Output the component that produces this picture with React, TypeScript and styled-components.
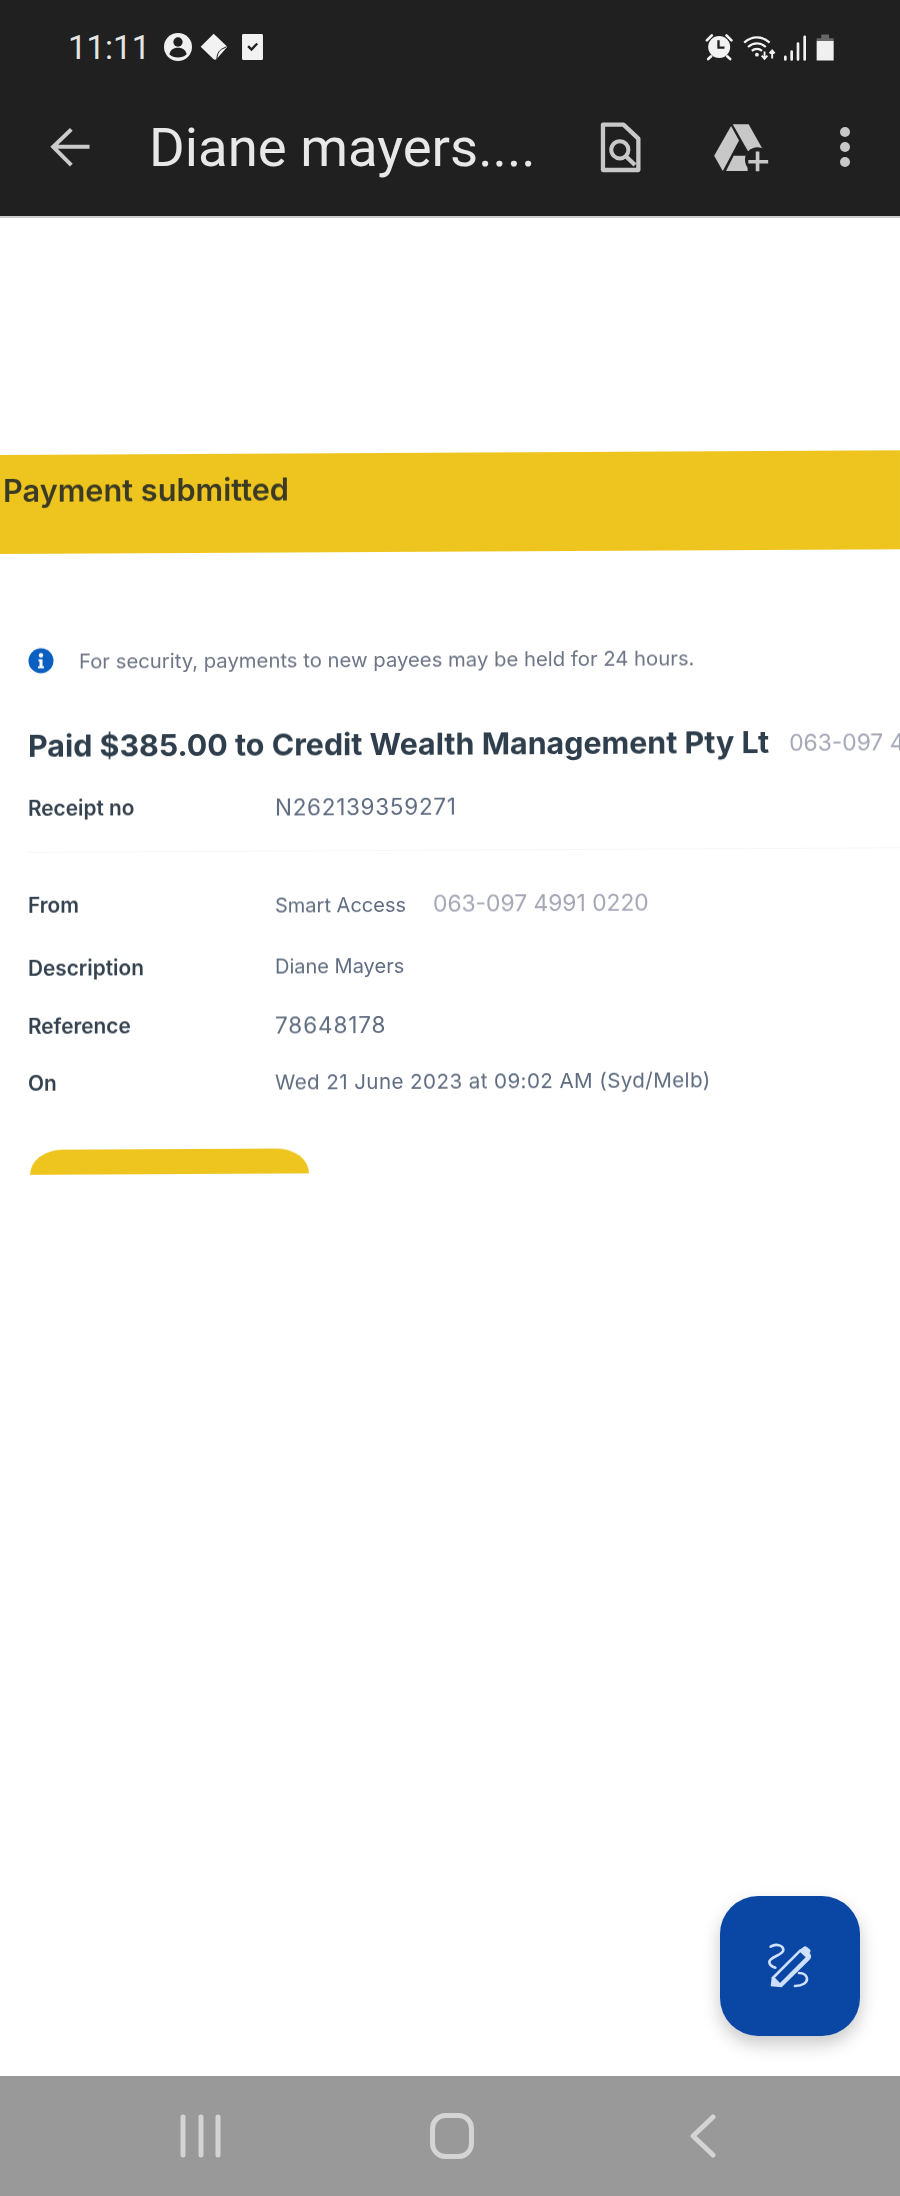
import React from "react";
import styled, { createGlobalStyle } from "styled-components";

const Global = createGlobalStyle`
    html, body {
        margin: 0;
        padding: 0;
        background: #fff;
    }
`

const Screen = styled.div`
    width: 900px;
    height: 2196px;
    display: flex;
    flex-direction: column;
    overflow: hidden;
    font-family: Inter, "Liberation Sans", sans-serif;
`

const Header = styled.header`
    flex: none;
    height: 216px;
    background: #202020;
    border-bottom: 2px solid #cfcfcf;
`

const StatusBar = styled.div`
    height: 94px;
    padding: 0 66px 0 68px;
    display: flex;
    align-items: center;
`

const Time = styled.span`
    font-family: Roboto, sans-serif;
    font-size: 33px;
    font-weight: 400;
    color: #e4e4e4;
    margin-right: 14px;
`

const StatusGroup = styled.div<{ $gap: number }>`
    display: flex;
    align-items: center;
    gap: ${p => p.$gap}px;
`

const StatusIcon = styled.svg<{ $left?: number, $right?: number }>`
    margin-left: ${p => p.$left ?? 0}px;
    margin-right: ${p => p.$right ?? 0}px;
`

const Spacer = styled.div`
    flex: 1;
`

const Toolbar = styled.div`
    height: 106px;
    padding: 0 49px 0 48px;
    display: flex;
    align-items: center;
`

const Title = styled.h1`
    flex: 1;
    margin: 0 0 0 56px;
    font-family: Roboto, sans-serif;
    font-size: 54.5px;
    font-weight: 400;
    color: #e8e8e8;
    white-space: nowrap;
`

const Actions = styled.div`
    display: flex;
    align-items: center;
    gap: 68.5px;
`

const Viewer = styled.main`
    flex: 1;
    position: relative;
    overflow: hidden;
    background: #fff;
`

const Sheet = styled.div`
    width: 900px;
    padding-top: 237px;
    transform: skewY(-0.3deg);
    transform-origin: 0 0;
    filter: blur(0.45px);
`

const Banner = styled.div`
    height: 99px;
    padding: 20px 0 0 3px;
    box-sizing: border-box;
    background: #eec51e;
    font-size: 30.7px;
    line-height: 32px;
    font-weight: 600;
    color: #3b3a25;
`

const Notice = styled.div`
    margin: 93px 0 0 28px;
    height: 28px;
    display: flex;
    align-items: center;
    gap: 25px;
    font-size: 20.3px;
    color: #6d7585;
    white-space: nowrap;
`

const Heading = styled.div`
    margin: 51px 0 0 28px;
    height: 40px;
    display: flex;
    align-items: center;
    white-space: nowrap;
`

const HeadingText = styled.h2`
    margin: 0;
    font-size: 30.4px;
    font-weight: 700;
    color: #2f3e4c;
`

const Account = styled.span<{ $gap: number }>`
    margin-left: ${p => p.$gap}px;
    font-size: 22.8px;
    color: #a4a7b6;
`

const Row = styled.div<{ $top: number }>`
    margin: ${p => p.$top}px 0 0 28px;
    height: 40px;
    display: grid;
    grid-template-columns: 247px 1fr;
    align-items: center;
    font-size: 20px;
    white-space: nowrap;
`

const Label = styled.span`
    font-weight: 600;
    font-size: 20.8px;
    color: #34424f;
`

const Value = styled.span<{ $size?: number, $tracking?: number }>`
    font-size: ${p => p.$size ?? 20}px;
    letter-spacing: ${p => p.$tracking ?? 0}px;
    color: #5f6c80;
`

const Divider = styled.div`
    margin: 24px 0 0 28px;
    height: 1px;
    background: #f6f6f6;
`

const YellowButton = styled.div`
    margin: 47px 0 0 30px;
    width: 279px;
    height: 25px;
    background: #eec51e;
    border-radius: 32px 32px 0 0 / 25px 25px 0 0;
`

const Fab = styled.button`
    position: absolute;
    right: 40px;
    bottom: 40px;
    width: 140px;
    height: 140px;
    padding: 0;
    border: 0;
    border-radius: 38px;
    background: #0a47a5;
    box-shadow: 0 8px 18px rgba(0, 0, 0, 0.22);
    display: flex;
    align-items: center;
    justify-content: center;
`

const NavBar = styled.nav`
    flex: none;
    height: 120px;
    background: #999999;
    display: flex;
    align-items: center;
    padding: 0 184px 0 180px;
    justify-content: space-between;
`

const HomeIcon = styled.svg`
    margin-right: 9px;
`

export default function App() {
    return (
        <Screen>
            <Global />
            <Header>
                <StatusBar>
                    <Time>11:11</Time>
                    <StatusGroup $gap={8}>
                        <svg width="28" height="28" viewBox="488 104 78 78">
                            <circle cx="527" cy="143" r="39" fill="#f0f0f0" />
                            <circle cx="527" cy="129" r="13" fill="#202020" />
                            <path d="M503 163c3-14 14-18 24-18s21 4 24 18c-6 6-15 9-24 9s-18-3-24-9z" fill="#202020" />
                        </svg>
                        <svg width="28" height="28" viewBox="600 100 86 86">
                            <path d="M642 102l42 40-33 38c-3 3-7 3-10 0l-39-38z" fill="#f2f2f2" />
                            <path d="M652 180c0-12 4-24 14-30l16-8" fill="none" stroke="#202020" strokeWidth="3" />
                        </svg>
                        <StatusIcon $left={6} width="21" height="26" viewBox="727 104 62 77">
                            <rect x="727" y="104" width="62" height="77" rx="4" fill="#f2f2f2" />
                            <path d="M745 140l10 10 17-18" fill="none" stroke="#202020" strokeWidth="7" />
                        </StatusIcon>
                    </StatusGroup>
                    <Spacer />
                    <StatusGroup $gap={5}>
                        <svg width="32" height="30" viewBox="760 95 95 90">
                            <circle cx="805" cy="140" r="33" fill="#f2f2f2" />
                            <path d="M768 120l15-15M842 120l-15-15M781 168l-9 8M829 168l9 8" stroke="#f2f2f2" strokeWidth="8" strokeLinecap="round" />
                            <path d="M803 120v22h18" fill="none" stroke="#202020" strokeWidth="7" />
                        </svg>
                        <StatusIcon $right={2} width="35" height="27" viewBox="870 95 110 85">
                            <path d="M880 122c24-22 56-22 80 0M892 136c17-15 39-15 56 0M904 148c9-8 23-8 32 0" fill="none" stroke="#f2f2f2" strokeWidth="7" />
                            <circle cx="920" cy="160" r="6" fill="#f2f2f2" />
                            <path d="M944 150v20M935 163l9 10 9-10M968 172v-22M960 156l8-9 8 9" fill="none" stroke="#f2f2f2" strokeWidth="6" />
                        </StatusIcon>
                        <svg width="25" height="27" viewBox="995 100 75 80">
                            <path d="M1002 176v-8M1021 176v-24M1040 176v-48M1060 176v-68" stroke="#f2f2f2" strokeWidth="8" strokeLinecap="round" />
                        </svg>
                        <StatusIcon $left={3.5} width="18" height="27" viewBox="1096 100 55 80">
                            <path d="M1098 112h14v-12h24v12h14v8h-52z" fill="#666666" />
                            <rect x="1098" y="120" width="52" height="60" rx="2" fill="#f0f0f0" />
                        </StatusIcon>
                    </StatusGroup>
                </StatusBar>
                <Toolbar>
                    <svg width="45" height="43" viewBox="145 375 135 130">
                        <path d="M270 438H160M215 385l-55 53 55 55" fill="none" stroke="#cbcbcb" strokeWidth="12" />
                    </svg>
                    <Title>Diane mayers....</Title>
                    <Actions>
                        <svg width="43" height="53" viewBox="445 360 130 160">
                            <path d="M457 371h62l45 42v95H457z" fill="none" stroke="#c8c8c8" strokeWidth="13" strokeLinejoin="round" />
                            <circle cx="508" cy="447" r="26" fill="none" stroke="#c8c8c8" strokeWidth="12" />
                            <path d="M527 467l27 26" stroke="#c8c8c8" strokeWidth="13" />
                        </svg>
                        <svg width="60" height="53" viewBox="780 355 180 160">
                            <path d="M845 365h48l50 88h-48z" fill="#c8c8c8" />
                            <path d="M840 370l24 44-49 92-26-46z" fill="#c8c8c8" />
                            <path d="M848 460h42l0 46h-65z" fill="#c8c8c8" />
                            <circle cx="920" cy="472" r="38" fill="#202020" />
                            <path d="M920 447v60M892 478h60" stroke="#c8c8c8" strokeWidth="11" />
                        </svg>
                        <svg width="12" height="44" viewBox="0 0 12 44">
                            <circle cx="6" cy="7" r="5" fill="#c8c8c8" />
                            <circle cx="6" cy="22" r="5" fill="#c8c8c8" />
                            <circle cx="6" cy="37" r="5" fill="#c8c8c8" />
                        </svg>
                    </Actions>
                </Toolbar>
            </Header>
            <Viewer>
                <Sheet>
                    <Banner>Payment submitted</Banner>
                    <Notice>
                        <svg width="26" height="26" viewBox="0 0 26 26">
                            <circle cx="13" cy="13" r="12.5" fill="#0a5fc0" />
                            <circle cx="13" cy="7.5" r="2.2" fill="#fff" />
                            <path d="M10.5 11.5h4v7h1.5v2h-6v-2h1.5v-5h-1z" fill="#fff" />
                        </svg>
                        <span>For security, payments to new payees may be held for 24 hours.</span>
                    </Notice>
                    <Heading>
                        <HeadingText>Paid $385.00 to Credit Wealth Management Pty Lt</HeadingText>
                        <Account $gap={20}>063-097 4</Account>
                    </Heading>
                    <Row $top={22}>
                        <Label>Receipt no</Label>
                        <Value $size={22.5} $tracking={0.7}>N262139359271</Value>
                    </Row>
                    <Divider />
                    <Row $top={32}>
                        <Label>From</Label>
                        <Value>
                            Smart Access
                            <Account $gap={27}>063-097 4991 0220</Account>
                        </Value>
                    </Row>
                    <Row $top={23}>
                        <Label>Description</Label>
                        <Value>Diane Mayers</Value>
                    </Row>
                    <Row $top={18}>
                        <Label>Reference</Label>
                        <Value $size={22.5} $tracking={0.9}>78648178</Value>
                    </Row>
                    <Row $top={17}>
                        <Label>On</Label>
                        <Value $size={20.6} $tracking={0.4}>Wed 21 June 2023 at 09:02 AM (Syd/Melb)</Value>
                    </Row>
                    <YellowButton />
                </Sheet>
                <Fab aria-label="Edit">
                    <svg width="50" height="50" viewBox="255 245 150 150">
                        <path d="M272 381l3-27 82-82c6-6 14-6 20-1l12 11c6 6 6 13 0 19l-84 83z" fill="#cfe0ff" />
                        <path d="M285 355l76-76 16 15-77 77z" fill="#0a47a5" />
                        <path d="M363 270l18 19 8-8c3-4 3-8 0-11l-8-7c-4-3-8-3-11 0z" fill="#cfe0ff" />
                        <path d="M272 262c15-10 38-5 38 10 0 16-42 20-42 36 0 8 8 14 18 17M357 341c15 0 24 8 24 18s-12 21-36 21" fill="none" stroke="#cfe0ff" strokeWidth="8" strokeLinecap="round" />
                    </svg>
                </Fab>
            </Viewer>
            <NavBar>
                <svg width="42" height="44" viewBox="0 0 42 44">
                    <path d="M3 3v38M21 3v38M38 3v38" stroke="#d4d4d4" strokeWidth="5" strokeLinecap="round" />
                </svg>
                <HomeIcon width="44" height="46" viewBox="0 0 44 46">
                    <rect x="2.5" y="2.5" width="39" height="41" rx="13" fill="none" stroke="#d4d4d4" strokeWidth="5" />
                </HomeIcon>
                <svg width="26" height="44" viewBox="0 0 26 44">
                    <path d="M23 3L3 22l20 19" fill="none" stroke="#d4d4d4" strokeWidth="5" strokeLinecap="round" strokeLinejoin="round" />
                </svg>
            </NavBar>
        </Screen>
    )
}
